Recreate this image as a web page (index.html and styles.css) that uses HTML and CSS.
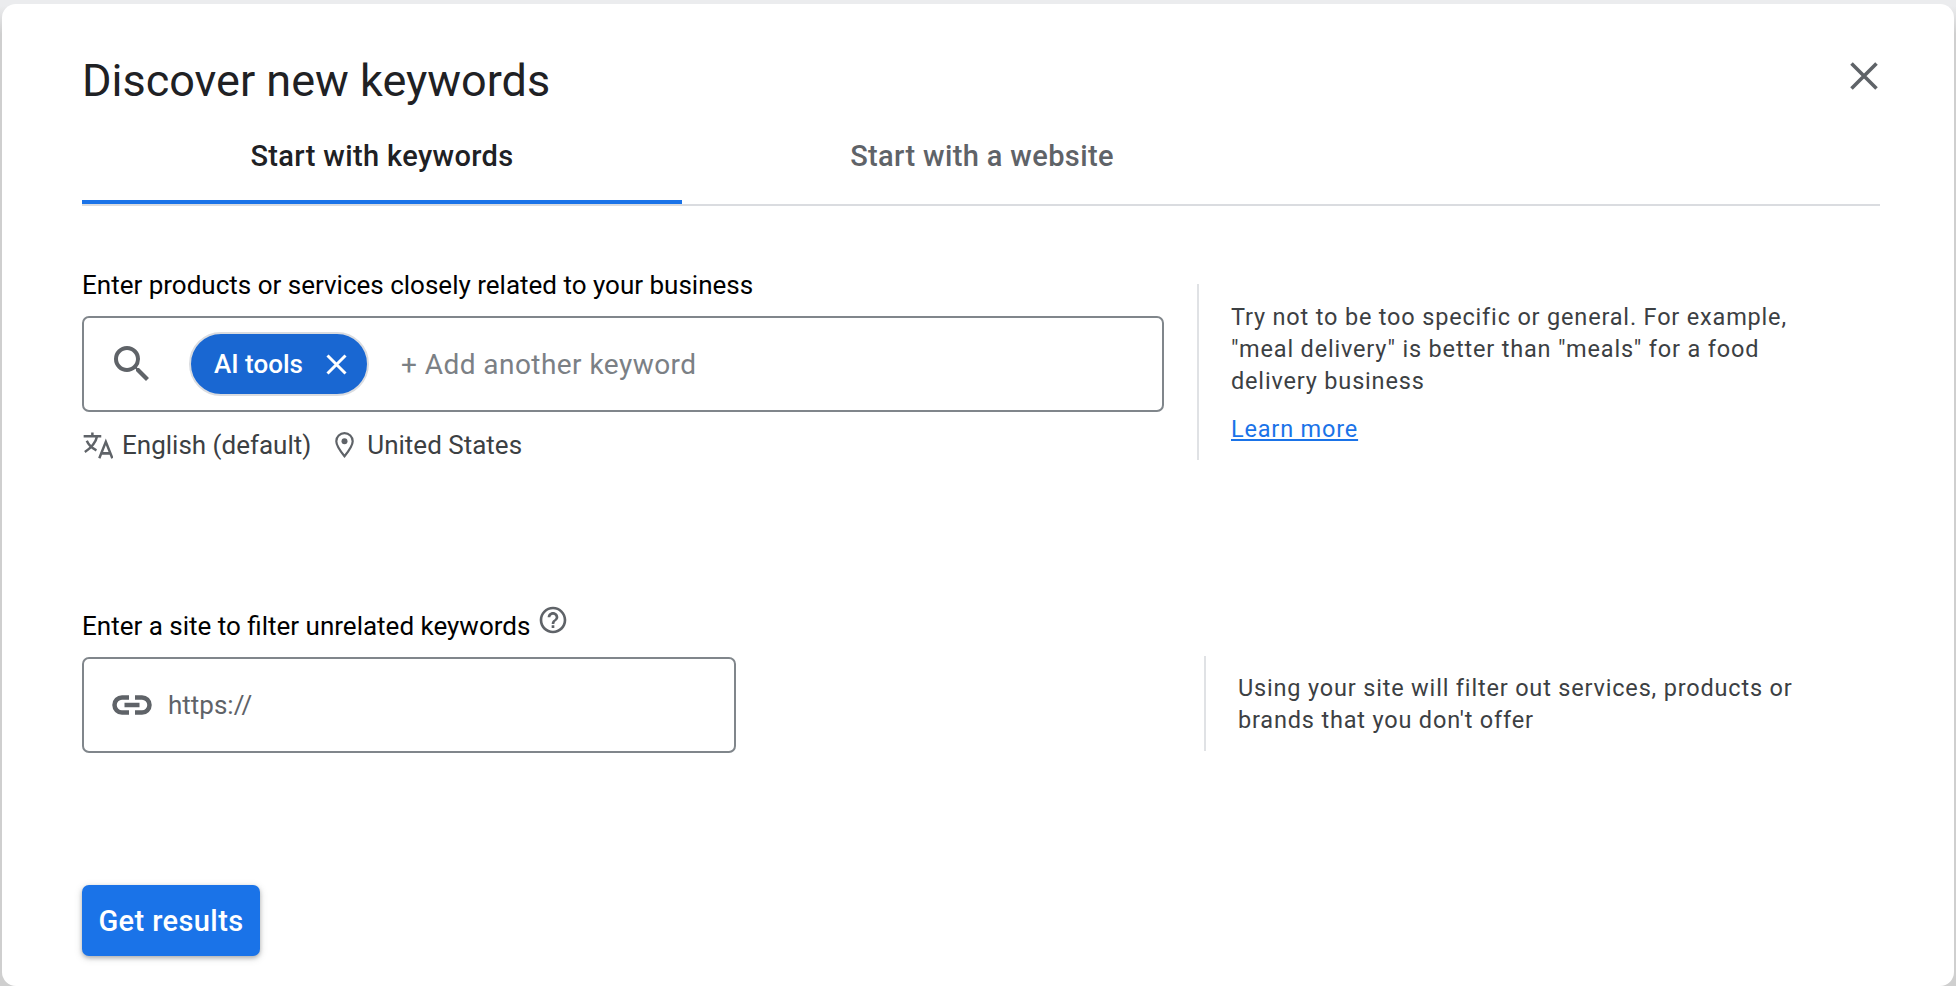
FILE: index.html
```html
<!DOCTYPE html>
<html lang="en">
<head>
<meta charset="utf-8">
<title>Discover new keywords</title>
<link rel="stylesheet" href="styles.css">
</head>
<body>
<main class="card">
  <header class="head">
    <h1 class="title">Discover new keywords</h1>
    <button class="close" aria-label="Close">
      <svg viewBox="0 0 28 28" class="close-icon"><path d="M1.500 1.500 26.500 26.500M26.500 1.500 1.500 26.500"/></svg>
    </button>
  </header>
  <nav class="tabs">
    <div class="tab tab-active">Start with keywords</div>
    <div class="tab">Start with a website</div>
  </nav>

  <section class="row row-one">
    <div class="main-col">
      <label class="label">Enter products or services closely related to your business</label>
      <div class="field field-wide">
        <svg class="search" viewBox="0 0 24 24"><path d="M15.500 14h-.79l-.28-.27A6.470 6.470 0 0 0 16 9.500 6.500 6.500 0 1 0 9.500 16c1.610 0 3.090-.59 4.230-1.570l.27.28v.79l5 4.990L20.490 19l-4.990-5zm-6 0C7.010 14 5 11.990 5 9.500S7.010 5 9.500 5 14 7.010 14 9.500 11.990 14 9.500 14z"/></svg>
        <span class="chip">AI tools
          <svg class="chip-x" viewBox="0 0 21 21"><path d="M1.500 1.500 19.500 19.500M19.500 1.500 1.500 19.500"/></svg>
        </span>
        <span class="placeholder">+ Add another keyword</span>
      </div>
      <div class="meta">
        <svg class="translate" viewBox="0.5 0 23 20.200" preserveAspectRatio="none"><path d="M1 3.200h13.500M7.700 .4v2.800M11.300 3.200C10.500 7 8 11 1.900 15M3.400 6.600c1.300 3 3.800 5.400 7.400 7.200"/><path d="M13 19.600 18 7.300l5 12.300M14.600 16h6.800"/></svg>
        <span class="meta-text">English (default)</span>
        <svg class="pin" viewBox="0 0 19 26"><path d="M9.500 1.200C5 1.200 1.300 4.700 1.300 9.200c0 4.500 4 9.800 8.200 15 4.200-5.200 8.200-10.500 8.200-15 0-4.500-3.700-8-8.200-8z"/><circle cx="9.500" cy="9.200" r="3"/></svg>
        <span class="meta-text">United States</span>
      </div>
    </div>
    <aside class="note">
      <p class="note-text">Try not to be too specific or general. For example, "meal delivery" is better than "meals" for a food delivery business</p>
      <a class="learn" href="#">Learn more</a>
    </aside>
  </section>

  <section class="row row-two">
    <div class="main-col">
      <label class="label label-help">Enter a site to filter unrelated keywords
        <svg class="help" viewBox="0 0 24 24"><path d="M11 18h2v-2h-2v2zm1-16C6.480 2 2 6.480 2 12s4.480 10 10 10 10-4.480 10-10S17.520 2 12 2zm0 18c-4.410 0-8-3.590-8-8s3.590-8 8-8 8 3.590 8 8-3.590 8-8 8zm0-14c-2.210 0-4 1.790-4 4h2c0-1.100.9-2 2-2s2 .9 2 2c0 2-3 1.750-3 5h2c0-2.250 3-2.500 3-5 0-2.210-1.790-4-4-4z"/></svg>
      </label>
      <div class="field field-site">
        <svg class="link" viewBox="0 0 40 20"><path d="M17 2.500H10a7.500 7.500 0 0 0 0 15h7M23 2.500h7a7.500 7.500 0 0 1 0 15h-7M12.500 10h15"/></svg>
        <span class="url">https://</span>
      </div>
    </div>
    <aside class="note note-two">
      <p class="note-text">Using your site will filter out services, products or brands that you don't offer</p>
    </aside>
  </section>

  <button class="submit">Get results</button>
</main>
</body>
</html>
```
FILE: styles.css
```css
* { box-sizing: border-box; }
html, body { margin: 0; height: 100%; }
body {
  background: linear-gradient(#ebecee 0, #ebecee 6px, #cfcfcf 34px);
  font-family: Roboto, "Liberation Sans", sans-serif;
  overflow: hidden;
  padding: 4px 2px 0;
}
.card {
  height: 982px;
  background: #fff;
  border-radius: 14px;
  padding: 0 74px 0 80px;
}
.head {
  display: flex;
  justify-content: space-between;
  height: 138px;
  padding-top: 52px;
}
.title {
  margin: 0;
  font-size: 45px;
  line-height: 50px;
  font-weight: 400;
  color: #202124;
}
.close {
  border: 0;
  padding: 0;
  margin: 6px 2px 0 0;
  width: 28px;
  height: 28px;
  background: none;
}
.close-icon { display: block; width: 28px; height: 28px; }
.close-icon path { stroke: #5f6368; stroke-width: 3.600; fill: none; }
.tabs {
  display: flex;
  height: 64px;
  border-bottom: 2px solid #dadce0;
}
.tab {
  width: 600px;
  height: 64px;
  text-align: center;
  font-size: 29px;
  line-height: 29px;
  font-weight: 500;
  letter-spacing: 0.37px;
  color: #5f6368;
}
.tab-active {
  color: #202124;
  border-bottom: 4px solid #1a73e8;
  height: 62px;
}
.row { display: flex; }
.row-one { margin-top: 64px; }
.row-two { margin-top: 150px; }
.row-one .main-col { width: 1115px; }
.row-two .main-col { width: 1122px; }
.label {
  display: block;
  font-size: 26px;
  line-height: 30px;
  color: #000;
}
.label-help { display: flex; align-items: flex-start; }
.help {
  width: 32px;
  height: 32px;
  fill: #5f6368;
  margin: -7px 0 0 7px;
}
.field {
  display: flex;
  align-items: center;
  height: 96px;
  margin-top: 16px;
  border: 2px solid #80868b;
  border-radius: 7px;
  background: #fff;
}
.field-wide { width: 1082px; }
.field-site { width: 654px; }
.search { width: 48px; height: 48px; margin-left: 24px; fill: #5f6368; flex: none; }
.chip {
  display: flex;
  align-items: center;
  flex: none;
  height: 64px;
  width: 180px;
  margin-left: 33px;
  padding-left: 23px;
  border: 2px solid #dadce0;
  border-radius: 32px;
  background: #1967d2;
  color: #fff;
  font-size: 26px;
  font-weight: 500;
}
.chip-x { width: 21px; height: 21px; margin-left: 23px; flex: none; }
.chip-x path { stroke: #fff; stroke-width: 3; fill: none; }
.placeholder {
  margin-left: 32px;
  font-size: 28px;
  color: #7b8085;
  letter-spacing: 0.45px;
}
.meta {
  display: flex;
  align-items: center;
  height: 32px;
  margin-top: 17px;
  font-size: 26px;
  color: #3c4043;
}
.meta-text { display: block; }
.translate { width: 30px; height: 27px; flex: none; margin: 0 9px 0 1px; }
.translate path { stroke: #5f6368; stroke-width: 1.900; fill: none; }
.pin { width: 19px; height: 26px; margin: 0 13px 0 24px; flex: none; }
.pin path { stroke: #5f6368; stroke-width: 2.200; fill: none; }
.pin circle { fill: #5f6368; }
.note {
  margin-top: 14px;
  padding: 17px 0 16px 32px;
  border-left: 2px solid #e0e2e5;
  width: 620px;
  height: 176px;
}
.note-two { margin-top: 45px; height: 95px; }
.note-text {
  margin: 0;
  font-size: 23.500px;
  line-height: 32px;
  color: #3c4043;
  letter-spacing: 0.82px;
}
.note-two .note-text { line-height: 31.500px; }
.learn {
  display: block;
  margin-top: 16px;
  font-size: 23.500px;
  line-height: 32px;
  letter-spacing: 0.82px;
  color: #1a73e8;
}
.url { margin-left: 16px; font-size: 26px; color: #5f6368; }
.link { width: 40px; height: 20px; margin-left: 28px; flex: none; }
.link path { stroke: #5f6368; stroke-width: 4.500; fill: none; }
.submit {
  display: block;
  margin-top: 132px;
  width: 178px;
  height: 71px;
  border: 0;
  border-radius: 7px;
  background: #1a73e8;
  color: #fff;
  font-family: Roboto, sans-serif;
  font-size: 29px;
  letter-spacing: 0.4px;
  font-weight: 500;
  box-shadow: 0 2px 4px rgba(60,64,67,.35), 0 2px 8px rgba(60,64,67,.15);
}
```
